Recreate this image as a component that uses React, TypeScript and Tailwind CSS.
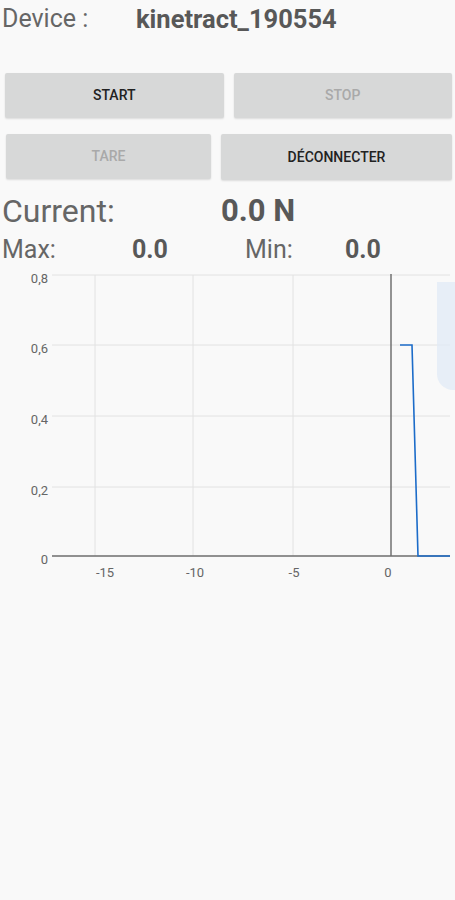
import React from "react";

const yTicks = [
  { label: "0,8", y: 14 },
  { label: "0,6", y: 84 },
  { label: "0,4", y: 155 },
  { label: "0,2", y: 226 },
  { label: "0", y: 295 },
];

const xTicks = [
  { label: "-15", x: 95, lx: 105 },
  { label: "-10", x: 193, lx: 195 },
  { label: "-5", x: 293, lx: 294 },
  { label: "0", x: 391, lx: 388 },
];

// chart drawn in coordinates relative to the top of the svg (page y 260)
const ForceChart: React.FC = () => (
  <svg width="455" height="330" className="block">
    {yTicks.map((t) => (
      <g key={t.label}>
        <line x1="52" x2="450" y1={t.y} y2={t.y} stroke="#e2e2e2" strokeWidth="1" />
        <text
          x="48"
          y={t.y + 8}
          textAnchor="end"
          fontSize="13"
          fill="#666666"
          fontFamily="Roboto, sans-serif"
        >
          {t.label}
        </text>
      </g>
    ))}
    {xTicks.map((t) => (
      <g key={t.label}>
        {t.label !== "0" && (
          <line x1={t.x} x2={t.x} y1="14" y2="295" stroke="#e2e2e2" strokeWidth="1" />
        )}
        <text
          x={t.lx}
          y="316"
          textAnchor="middle"
          fontSize="13"
          fill="#666666"
          fontFamily="Roboto, sans-serif"
        >
          {t.label}
        </text>
      </g>
    ))}
    <line x1="391" x2="391" y1="13" y2="295" stroke="#707070" strokeWidth="1.5" />
    <line x1="52" x2="450" y1="295" y2="295" stroke="#707070" strokeWidth="1.5" />
    <polyline
      points="400,84 412,84 418,295 450,295"
      fill="none"
      stroke="#1c6cc9"
      strokeWidth="1.6"
    />
  </svg>
);

const App: React.FC = () => {
  return (
    <div
      className="relative w-[455px] h-[900px] bg-[#f9f9f9] overflow-hidden"
      style={{ fontFamily: "Roboto, 'Noto Sans', sans-serif" }}
    >
      <div className="flex items-center h-[38px]">
        <span className="pl-[2px] w-[136px] text-[25px] text-[#666666]">Device :</span>
        <span className="text-[25.5px] font-bold text-[#585858]">kinetract_190554</span>
      </div>

      <div className="flex gap-[10px] pl-[5px] pr-[3px] mt-[35px]">
        <button className="flex-1 h-[45px] bg-[#d7d8d8] rounded-[2px] shadow-[0_1px_2px_rgba(0,0,0,0.12)] text-[14px] font-medium text-[#222222]">
          START
        </button>
        <button className="flex-1 h-[45px] bg-[#d7d8d8] rounded-[2px] shadow-[0_1px_2px_rgba(0,0,0,0.12)] text-[14px] font-medium text-[#a9a9a9]">
          STOP
        </button>
      </div>

      <div className="flex gap-[10px] pl-[6px] pr-[3px] mt-[16px]">
        <button className="w-[205px] h-[45px] bg-[#d7d8d8] rounded-[2px] shadow-[0_1px_2px_rgba(0,0,0,0.12)] text-[14px] font-medium text-[#a9a9a9]">
          TARE
        </button>
        <button className="flex-1 h-[46px] bg-[#d7d8d8] rounded-[2px] shadow-[0_1px_2px_rgba(0,0,0,0.12)] text-[14px] font-medium text-[#222222]">
          DÉCONNECTER
        </button>
      </div>

      <div className="flex items-center h-[40px] mt-[11px]">
        <span className="pl-[2px] w-[221px] text-[32px] text-[#666666]">Current:</span>
        <span className="text-[31px] font-bold text-[#585858]">0.0 N</span>
      </div>

      <div className="flex items-center h-[35px] pt-[2px]">
        <span className="pl-[2px] w-[132px] text-[25px] text-[#666666]">Max:</span>
        <span className="w-[113px] text-[25px] font-bold text-[#585858]">0.0</span>
        <span className="w-[100px] text-[25px] text-[#666666]">Min:</span>
        <span className="text-[25px] font-bold text-[#585858]">0.0</span>
      </div>

      <div className="mt-[-5px]">
        <ForceChart />
      </div>

      <div className="absolute left-[437px] top-[282px] w-[30px] h-[108px] rounded-bl-[16px] bg-[#dfeaf7]/70" />
    </div>
  );
};

export default App;
